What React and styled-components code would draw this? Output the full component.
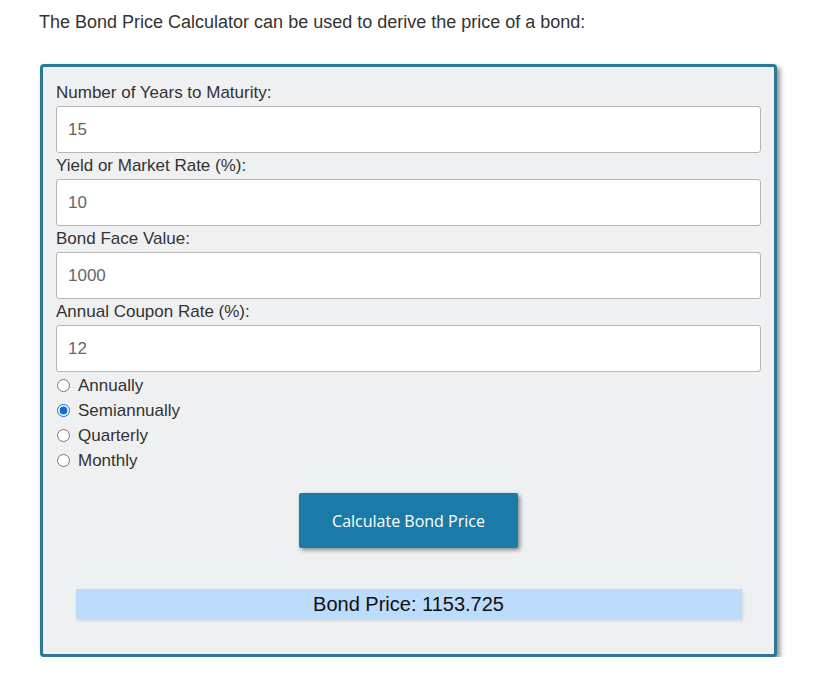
import React, { useState } from 'react'
import styled, { createGlobalStyle } from 'styled-components'

const GlobalStyle = createGlobalStyle`
    body {
        margin: 0;
        background: #ffffff;
        font-family: "Liberation Sans", Arial, sans-serif;
        color: #333333;
    }
`

const Page = styled.div`
    padding: 11px 0 0 40px;
    width: 737px;
`
const Intro = styled.p`
    margin: 0 0 31px -1px;
    font-size: 18px;
    line-height: 22px;
    color: #333333;
`
const Panel = styled.form`
    background: #eff0f2;
    border: 3px solid #2b7994;
    border-radius: 4px;
    box-shadow: 3px 3px 5px rgba(0, 0, 0, 0.45);
    padding: 16px 13px 35px 13px;
    display: flex;
    flex-direction: column;
`
const Field = styled.label`
    display: flex;
    flex-direction: column;
    margin-bottom: 3px;
`
const FieldLabel = styled.span`
    font-size: 17px;
    line-height: 20px;
    margin-bottom: 3px;
    color: #333333;
`
const Input = styled.input`
    box-sizing: border-box;
    height: 47px;
    width: 100%;
    border: 1px solid #b5b5b5;
    border-radius: 3px;
    background: #ffffff;
    padding: 0 11px;
    font-family: "Liberation Sans", Arial, sans-serif;
    font-size: 17px;
    color: #666666;
    outline: none;
`
const Radios = styled.div`
    display: flex;
    flex-direction: column;
    margin-top: -2px;
`
const RadioRow = styled.label`
    display: flex;
    align-items: center;
    height: 25px;
    font-size: 17px;
    color: #333333;
`
const Radio = styled.input`
    width: 13px;
    height: 13px;
    margin: 0 8px 0 1px;
    accent-color: #0b6fd8;
`
const Button = styled.button`
    align-self: center;
    margin-top: 20px;
    width: 219px;
    height: 55px;
    border: none;
    border-radius: 2px;
    background: #1a7ba8;
    color: #ffffff;
    font-family: "Open Sans", "Noto Sans", sans-serif;
    font-size: 16px;
    box-shadow: 2px 2px 4px rgba(0, 0, 0, 0.45);
    cursor: pointer;
`
const Result = styled.div`
    align-self: center;
    margin-top: 41px;
    width: 666px;
    height: 30px;
    background: #bddbfb;
    box-shadow: 1px 2px 3px rgba(0, 0, 0, 0.12);
    display: flex;
    align-items: center;
    justify-content: center;
    font-family: "Liberation Sans", Arial, sans-serif;
    font-size: 20px;
    color: #111111;
`

const fields = [
    { id: 'years', label: 'Number of Years to Maturity:', value: '15' },
    { id: 'rate', label: 'Yield or Market Rate (%):', value: '10' },
    { id: 'face', label: 'Bond Face Value:', value: '1000' },
    { id: 'coupon', label: 'Annual Coupon Rate (%):', value: '12' },
]
const frequencies = ['Annually', 'Semiannually', 'Quarterly', 'Monthly']

function App() {
    const [form, setForm] = useState(
        fields.reduce((acc, f) => ({ ...acc, [f.id]: f.value }), {})
    )
    const [freq, setFreq] = useState('Semiannually')

    const handleChange = e => {
        setForm({ ...form, [e.target.id]: e.target.value })
    }

    return (
        <>
            <GlobalStyle />
            <Page>
                <Intro>The Bond Price Calculator can be used to derive the price of a bond:</Intro>
                <Panel onSubmit={e => e.preventDefault()}>
                    {fields.map(f => (
                        <Field key={f.id} htmlFor={f.id}>
                            <FieldLabel>{f.label}</FieldLabel>
                            <Input id={f.id} value={form[f.id]} onChange={handleChange} />
                        </Field>
                    ))}
                    <Radios>
                        {frequencies.map(name => (
                            <RadioRow key={name}>
                                <Radio
                                    type="radio"
                                    name="frequency"
                                    checked={freq === name}
                                    onChange={() => setFreq(name)}
                                />
                                {name}
                            </RadioRow>
                        ))}
                    </Radios>
                    <Button type="submit">Calculate Bond Price</Button>
                    <Result>Bond Price: 1153.725</Result>
                </Panel>
            </Page>
        </>
    )
}

export default App
